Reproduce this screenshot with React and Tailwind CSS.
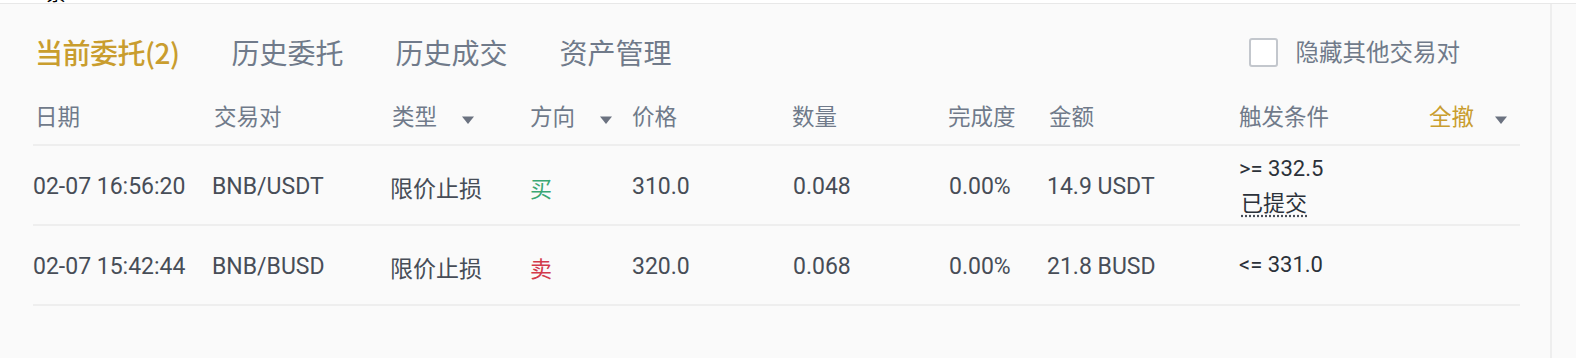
import React from 'react';

const font = { fontFamily: '"Noto Sans CJK SC", "Noto Sans", sans-serif' };
const num = { fontFamily: 'Roboto, "Noto Sans CJK SC", sans-serif' };

const Caret = () => (
  <svg width="14" height="10" viewBox="0 0 14 10" className="inline-block">
    <path d="M1 1.5h12L7 9z" fill="#6b7280" />
  </svg>
);

const cols = [
  { key: 'date', label: '日期', w: 'w-[179px]' },
  { key: 'pair', label: '交易对', w: 'w-[178px]' },
  { key: 'type', label: '类型', w: 'w-[138px]', caret: true },
  { key: 'side', label: '方向', w: 'w-[102px]', caret: true },
  { key: 'price', label: '价格', w: 'w-[160px]' },
  { key: 'amount', label: '数量', w: 'w-[156px]' },
  { key: 'filled', label: '完成度', w: 'w-[101px]' },
  { key: 'total', label: '金额', w: 'w-[190px]' },
  { key: 'trigger', label: '触发条件', w: 'w-[188px]' },
];

const orders = [
  {
    date: '02-07 16:56:20',
    pair: 'BNB/USDT',
    type: '限价止损',
    side: '买',
    buy: true,
    price: '310.0',
    amount: '0.048',
    filled: '0.00%',
    total: '14.9 USDT',
    trigger: '>= 332.5',
    status: '已提交',
  },
  {
    date: '02-07 15:42:44',
    pair: 'BNB/BUSD',
    type: '限价止损',
    side: '卖',
    buy: false,
    price: '320.0',
    amount: '0.068',
    filled: '0.00%',
    total: '21.8 BUSD',
    trigger: '<= 331.0',
  },
];

export default function App() {
  return (
    <div className="w-[1576px] h-[358px] bg-[#fafafa] overflow-hidden" style={font}>
      <div className="h-[4px] bg-white border-b border-[#e8e8e8] overflow-hidden">
        <div className="pl-[46px] -mt-[17px] text-[20px] leading-[20px] text-black">紧</div>
      </div>
      <div className="flex h-[354px]">
        <div className="w-[1552px] border-r-2 border-[#eeeeee]">
          {/* tabs */}
          <div className="h-[96px] flex items-center pl-[35px] pr-[90px]">
            <div className="flex items-center gap-[52px] text-[28px] leading-none">
              <span className="text-[#c99d2e] font-medium tracking-[-0.5px]">当前委托(2)</span>
              <span className="text-[#707a8a]">历史委托</span>
              <span className="text-[#707a8a]">历史成交</span>
              <span className="text-[#707a8a]">资产管理</span>
            </div>
            <label className="ml-auto flex items-center gap-[18px] text-[23.5px] text-[#707a8a]">
              <span className="w-[29px] h-[29px] rounded-[3px] border-2 border-[#c3c7cd] bg-white" />
              隐藏其他交易对
            </label>
          </div>

          <div className="ml-[33px] w-[1487px]">
            {/* header */}
            <div className="flex h-[46px] leading-[30px] text-[22.5px] text-[#707a8a] border-b-2 border-[#eeeeee]">
              {cols.map((c) => (
                <div key={c.key} className={`${c.w} flex items-start`}>
                  <span className="pl-[2px]">{c.label}</span>
                  {c.caret && (
                    <span className="ml-[24px] mt-[1px]">
                      <Caret />
                    </span>
                  )}
                </div>
              ))}
              <div className="flex-1 flex items-start pl-[4px]">
                <span className="text-[#c99d2e]">全撤</span>
                <span className="ml-[20px] mt-[1px]">
                  <Caret />
                </span>
              </div>
            </div>

            {/* rows */}
            {orders.map((o) => (
              <div
                key={o.date}
                className="flex items-center h-[80px] pt-[5px] border-b-2 border-[#eeeeee] text-[23px] text-[#474d57]"
              >
                <div className="w-[179px]" style={num}>{o.date}</div>
                <div className="w-[178px]" style={num}>{o.pair}</div>
                <div className="w-[138px] text-[23px]">{o.type}</div>
                <div className={`w-[102px] text-[22px] pl-[2px] ${o.buy ? 'text-[#3aa774]' : 'text-[#d33a4a]'}`}>
                  {o.side}
                </div>
                <div className="w-[160px] pl-[2px]" style={num}>{o.price}</div>
                <div className="w-[156px] pl-[3px]" style={num}>{o.amount}</div>
                <div className="w-[101px] pl-[3px]" style={num}>{o.filled}</div>
                <div className="w-[190px]" style={num}>{o.total}</div>
                <div className="w-[188px] text-[#2b3139] leading-[32px] -mt-[5px] pl-[2px]">
                  <div className="text-[22px]" style={num}>{o.trigger}</div>
                  {o.status && (
                    <div className="text-[22px] pl-[2px]">
                      <span className="underline decoration-dotted decoration-[#474d57] underline-offset-[4px]">
                        {o.status}
                      </span>
                    </div>
                  )}
                </div>
              </div>
            ))}
          </div>
        </div>
        <div className="flex-1 bg-[#fafafa]" />
      </div>
    </div>
  );
}
